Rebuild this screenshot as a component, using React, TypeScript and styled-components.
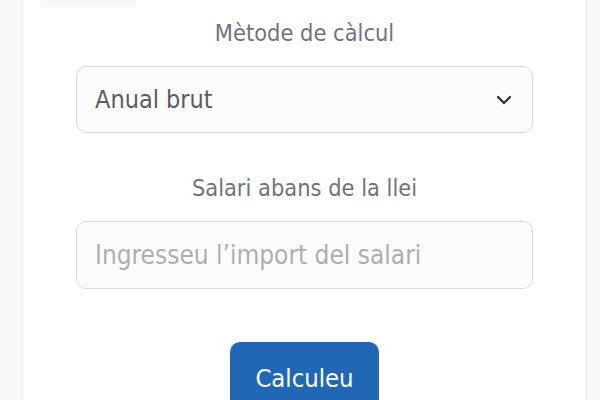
import styled, { createGlobalStyle } from "styled-components";

const GlobalStyle = createGlobalStyle`
  html, body {
    margin: 0;
    padding: 0;
    background: #f8f8f9;
  }
  body {
    font-family: "Liberation Sans Narrow", "DejaVu Sans Condensed", "Roboto", sans-serif;
  }
`;

const Page = styled.div`
  height: 400px;
  overflow: hidden;
`;

const Card = styled.div`
  margin: 0 13px 0 22px;
  min-height: 400px;
  background: #ffffff;
  border-left: 1px solid #e8e8e8;
  border-right: 1px solid #e8e8e8;
  display: flex;
  flex-direction: column;
  align-items: center;
  & > * {
    flex-shrink: 0;
  }
`;

const TopStub = styled.div`
  align-self: flex-start;
  margin-left: 18px;
  width: 95px;
  height: 7px;
  background: #f9f9f9;
`;

const Label = styled.label<{ $top: number }>`
  display: block;
  margin-top: ${(p) => p.$top}px;
  font-size: 23.4px;
  line-height: 36px;
  color: #707478;
`;

const Field = styled.div<{ $h: number }>`
  box-sizing: border-box;
  margin-top: 15px;
  width: 457px;
  height: ${(p) => p.$h}px;
  padding: 0 18px;
  border: 1px solid #dcdcdc;
  border-radius: 10px;
  background: #fcfcfc;
  display: flex;
  align-items: center;
  justify-content: space-between;
  font-size: 26px;
`;

const Value = styled.span`
  color: #595d61;
  font-size: 25px;
`;

const Placeholder = styled.span`
  color: #abafb3;
`;

const Chevron = styled.svg`
  margin-right: 2px;
`;

const Button = styled.button`
  margin-top: 53px;
  width: 149px;
  height: 70px;
  border: none;
  border-radius: 10px;
  background: #2068b5;
  color: #ffffff;
  font-family: inherit;
  font-size: 25.4px;
  padding: 2px 0 0;
`;

function App() {
  return (
    <>
      <GlobalStyle />
      <Page>
        <Card>
          <TopStub />
          <Label $top={8}>Mètode de càlcul</Label>
          <Field $h={67}>
            <Value>Anual brut</Value>
            <Chevron width="16" height="10" viewBox="0 0 16 10">
              <path
                d="M2 2l6 6 6-6"
                fill="none"
                stroke="#2d2f31"
                strokeWidth="2.2"
                strokeLinecap="round"
                strokeLinejoin="round"
              />
            </Chevron>
          </Field>
          <Label $top={37}>Salari abans de la llei</Label>
          <Field $h={68}>
            <Placeholder>Ingresseu l’import del salari</Placeholder>
          </Field>
          <Button>Calculeu</Button>
        </Card>
      </Page>
    </>
  );
}

export default App;
